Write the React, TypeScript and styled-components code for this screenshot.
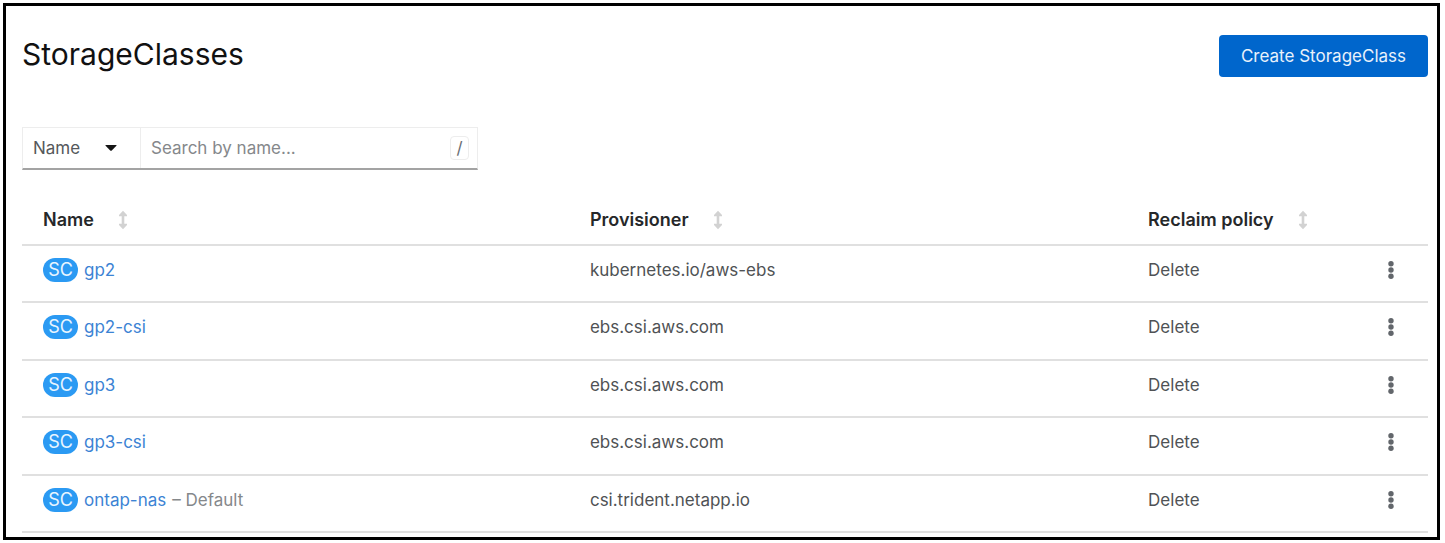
import React from "react";
import styled, { createGlobalStyle } from "styled-components";

const GlobalStyle = createGlobalStyle`
  *, *::before, *::after { box-sizing: border-box; }
  body {
    margin: 0;
    background: #fff;
    color: #4f5255;
    font-family: Inter, "Liberation Sans", sans-serif;
    font-size: 17px;
    line-height: 24px;
  }
  button, input, select, kbd { font: inherit; }
`;

const Frame = styled.main`
  min-height: calc(100vh - 6px);
  margin: 3px 5px 3px 3px;
  padding: 29px 9px 3px 16px;
  border: 3px solid #000;
`;

const PageHeader = styled.header`
  display: flex;
  align-items: flex-start;
  justify-content: space-between;
  margin-bottom: 50px;
`;

const Title = styled.h1`
  margin: 0;
  color: #111;
  font-size: 30px;
  font-weight: 400;
  line-height: 38px;
`;

const PrimaryButton = styled.button`
  height: 42px;
  padding: 0 22px;
  border: 0;
  border-radius: 4px;
  background: #06c;
  color: #e8f1fb;
  white-space: nowrap;
`;

const Filters = styled.form`
  display: flex;
  width: 456px;
  max-width: 100%;
  height: 43px;
  margin-bottom: 38px;
  border: 1px solid #ededed;
  border-bottom: 2px solid #a3a3a3;
`;

const SelectBox = styled.div`
  display: grid;
  flex: 0 0 118px;
  align-items: center;
  border-right: 1px solid #ededed;

  > * { grid-area: 1 / 1; }
  > svg { justify-self: end; margin-right: 23px; pointer-events: none; }
`;

const Select = styled.select`
  width: 100%;
  height: 40px;
  padding: 0 10px;
  border: 0;
  appearance: none;
  background: transparent;
  color: #55585b;
`;

const SearchBox = styled.div`
  display: flex;
  flex: 1;
  align-items: center;
  padding: 0 8px 0 10px;
`;

const SearchInput = styled.input`
  flex: 1;
  min-width: 0;
  height: 40px;
  padding: 0;
  border: 0;
  outline: 0;
  background: transparent;
  color: #151515;

  &::placeholder { color: #85888b; opacity: 1; }
`;

const Shortcut = styled.kbd`
  width: 19px;
  height: 24px;
  border: 1px solid #ededed;
  border-radius: 4px;
  color: #6a6e73;
  line-height: 22px;
  text-align: center;
`;

const Table = styled.table`
  width: 100%;
  border-collapse: separate;
  border-spacing: 0;
  table-layout: fixed;
`;

const HeadCell = styled.th<{ $width?: string }>`
  width: ${({ $width }) => $width ?? "auto"};
  height: 38px;
  padding: 0 0 12px 21px;
  border-bottom: 2px solid #e0e0e0;
  text-align: left;
  vertical-align: top;
`;

const SortButton = styled.button`
  display: flex;
  align-items: center;
  gap: 24px;
  padding: 0;
  border: 0;
  background: none;
  color: #26282a;
  font-size: 18px;
  font-weight: 600;
  line-height: 24px;
  white-space: nowrap;
`;

const Row = styled.tr`
  height: 57px;
  &:nth-child(even) { height: 58px; }
`;

const Cell = styled.td`
  padding: 12px 0 0 21px;
  border-bottom: 2px solid #e0e0e0;
  vertical-align: top;
`;

const ActionCell = styled(Cell)`
  padding-left: 0;
  text-align: center;
`;

const Resource = styled.div`
  display: flex;
  align-items: center;
  gap: 6px;
  white-space: nowrap;
`;

const Badge = styled.span`
  width: 35px;
  height: 24px;
  border-radius: 12px;
  background: #2b9af3;
  color: #e9f5ff;
  font-size: 18px;
  text-align: center;
`;

const ResourceLink = styled.a`
  color: #3c83d4;
  text-decoration: none;
`;

const Muted = styled.span`
  color: #85888b;
`;

const KebabButton = styled.button`
  display: inline-flex;
  align-items: center;
  justify-content: center;
  width: 32px;
  height: 24px;
  padding: 0;
  border: 0;
  background: none;
  color: #62666b;
  vertical-align: top;
`;

const CaretIcon = () => (
  <svg width="12" height="8" viewBox="0 0 12 8" aria-hidden="true">
    <path d="M1 1h10q1 0 .4.8L6.8 6.5q-.8.7-1.6 0L.6 1.8Q0 1 1 1z" fill="#151515" />
  </svg>
);

const SortIcon = () => (
  <svg width="10" height="20" viewBox="0 0 10 20" aria-hidden="true">
    <path
      d="M5 .8 9 5v1.2H6.3v7.6H9V15l-4 4.2L1 15v-1.2h2.7V6.2H1V5z"
      fill="#d2d2d2"
    />
  </svg>
);

const KebabIcon = () => (
  <svg width="6" height="20" viewBox="0 0 6 20" fill="currentColor" aria-hidden="true">
    <circle cx="3" cy="3.7" r="2.7" />
    <circle cx="3" cy="10" r="2.7" />
    <circle cx="3" cy="16.3" r="2.7" />
  </svg>
);

const columns = [
  { label: "Name", width: "38.9%" },
  { label: "Provisioner", width: "39.7%" },
  { label: "Reclaim policy" },
];

const storageClasses = [
  { name: "gp2", provisioner: "kubernetes.io/aws-ebs" },
  { name: "gp2-csi", provisioner: "ebs.csi.aws.com" },
  { name: "gp3", provisioner: "ebs.csi.aws.com" },
  { name: "gp3-csi", provisioner: "ebs.csi.aws.com" },
  { name: "ontap-nas", provisioner: "csi.trident.netapp.io", isDefault: true },
];

export default function App() {
  return (
    <>
      <GlobalStyle />
      <Frame>
        <PageHeader>
          <Title>StorageClasses</Title>
          <PrimaryButton type="button">Create StorageClass</PrimaryButton>
        </PageHeader>
        <Filters onSubmit={(e) => e.preventDefault()}>
          <SelectBox>
            <Select aria-label="Filter by">
              <option>Name</option>
            </Select>
            <CaretIcon />
          </SelectBox>
          <SearchBox>
            <SearchInput type="text" aria-label="Search by name" placeholder="Search by name..." />
            <Shortcut>/</Shortcut>
          </SearchBox>
        </Filters>
        <Table>
          <thead>
            <tr>
              {columns.map((c) => (
                <HeadCell key={c.label} scope="col" $width={c.width}>
                  <SortButton type="button">
                    {c.label}
                    <SortIcon />
                  </SortButton>
                </HeadCell>
              ))}
              <HeadCell $width="74px" aria-label="Actions" />
            </tr>
          </thead>
          <tbody>
            {storageClasses.map((s) => (
              <Row key={s.name}>
                <Cell>
                  <Resource>
                    <Badge>SC</Badge>
                    <ResourceLink href="#">{s.name}</ResourceLink>
                    {s.isDefault && <Muted>– Default</Muted>}
                  </Resource>
                </Cell>
                <Cell>{s.provisioner}</Cell>
                <Cell>Delete</Cell>
                <ActionCell>
                  <KebabButton type="button" aria-label={`Actions for ${s.name}`}>
                    <KebabIcon />
                  </KebabButton>
                </ActionCell>
              </Row>
            ))}
          </tbody>
        </Table>
      </Frame>
    </>
  );
}
